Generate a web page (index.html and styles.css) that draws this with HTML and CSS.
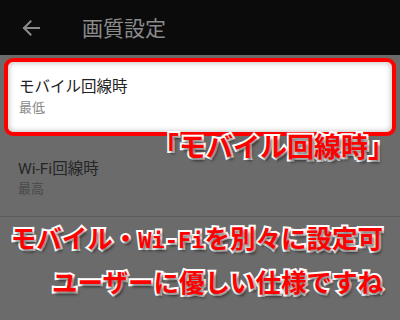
FILE: index.html
```html
<html>
<head>
<meta charset="utf-8">
<link rel="stylesheet" href="styles.css">
</head>
<body>
<div class="screen">
  <div class="appbar">
    <svg class="back" width="20" height="18" viewBox="0 0 20 18">
      <path d="M18 9 H3 M9.5 2.5 L3 9 L9.5 15.5" fill="none" stroke="#8a8a8a" stroke-width="2" stroke-linecap="square"/>
    </svg>
    <div class="title">画質設定</div>
  </div>

  <div class="item item-focus">
    <div class="item-title">モバイル回線時</div>
    <div class="item-sub">最低</div>
  </div>
  <div class="item item-dim">
    <div class="item-title">Wi-Fi回線時</div>
    <div class="item-sub">最高</div>
  </div>

  <div class="note note-label">「モバイル回線時」</div>
  <div class="note note-main">モバイル・<span class="mono">Wi-Fi</span>を別々に設定可<br>ユーザーに優しい仕様ですね</div>
</div>
</body>
</html>
```

FILE: styles.css
```css
html, body {
  margin: 0;
  padding: 0;
}
body {
  font-family: Roboto, "Noto Sans CJK JP", sans-serif;
}

.screen {
  position: relative;
  width: 400px;
  height: 320px;
  overflow: hidden;
  background: #6b6b6b;
}

.appbar {
  height: 55px;
  background: #0b0b0b;
  display: flex;
  align-items: center;
}
.back {
  margin-left: 21px;
}
.title {
  margin-left: 41px;
  margin-top: -2px;
  font-size: 21px;
  color: #8b8b8b;
  font-family: "Noto Sans CJK JP", sans-serif;
}

.item {
  font-family: Roboto, "Noto Sans CJK JP", sans-serif;
}
.item-focus {
  margin: 3px 4px 0;
  border: 4px solid #ff0000;
  border-radius: 9px;
  background: #fff;
  box-shadow: inset 0 0 6px rgba(0, 0, 0, 0.3);
  padding: 15px 11px 15px;
}
.item-focus .item-title {
  font-size: 15.5px;
  line-height: 20px;
  color: #222;
}
.item-focus .item-sub {
  margin-top: 2px;
  font-size: 13px;
  line-height: 18px;
  color: #8a8a8a;
}

.item-dim {
  padding: 23px 18px 18px;
  border-bottom: 1px solid #5c5c5c;
}
.item-dim .item-title {
  font-size: 15.5px;
  line-height: 20px;
  color: #262626;
}
.item-dim .item-sub {
  margin-top: 1px;
  font-size: 13px;
  line-height: 18px;
  color: #4a4a4a;
}

.note {
  position: absolute;
  font-family: "Noto Sans CJK JP", sans-serif;
  font-weight: bold;
  color: #ff0000;
  white-space: nowrap;
  -webkit-text-stroke: 4px #fff;
  paint-order: stroke fill;
  text-shadow: 2px 3px 3px rgba(0, 0, 0, 0.55);
}
.note-label {
  right: 5px;
  top: 132px;
  font-size: 27px;
  line-height: 27px;
}
.note-main {
  right: 17px;
  top: 217px;
  font-size: 25.5px;
  line-height: 40px;
  text-align: right;
}
.mono {
  font-family: "DejaVu Sans Mono", monospace;
  font-size: 22px;
}
```
